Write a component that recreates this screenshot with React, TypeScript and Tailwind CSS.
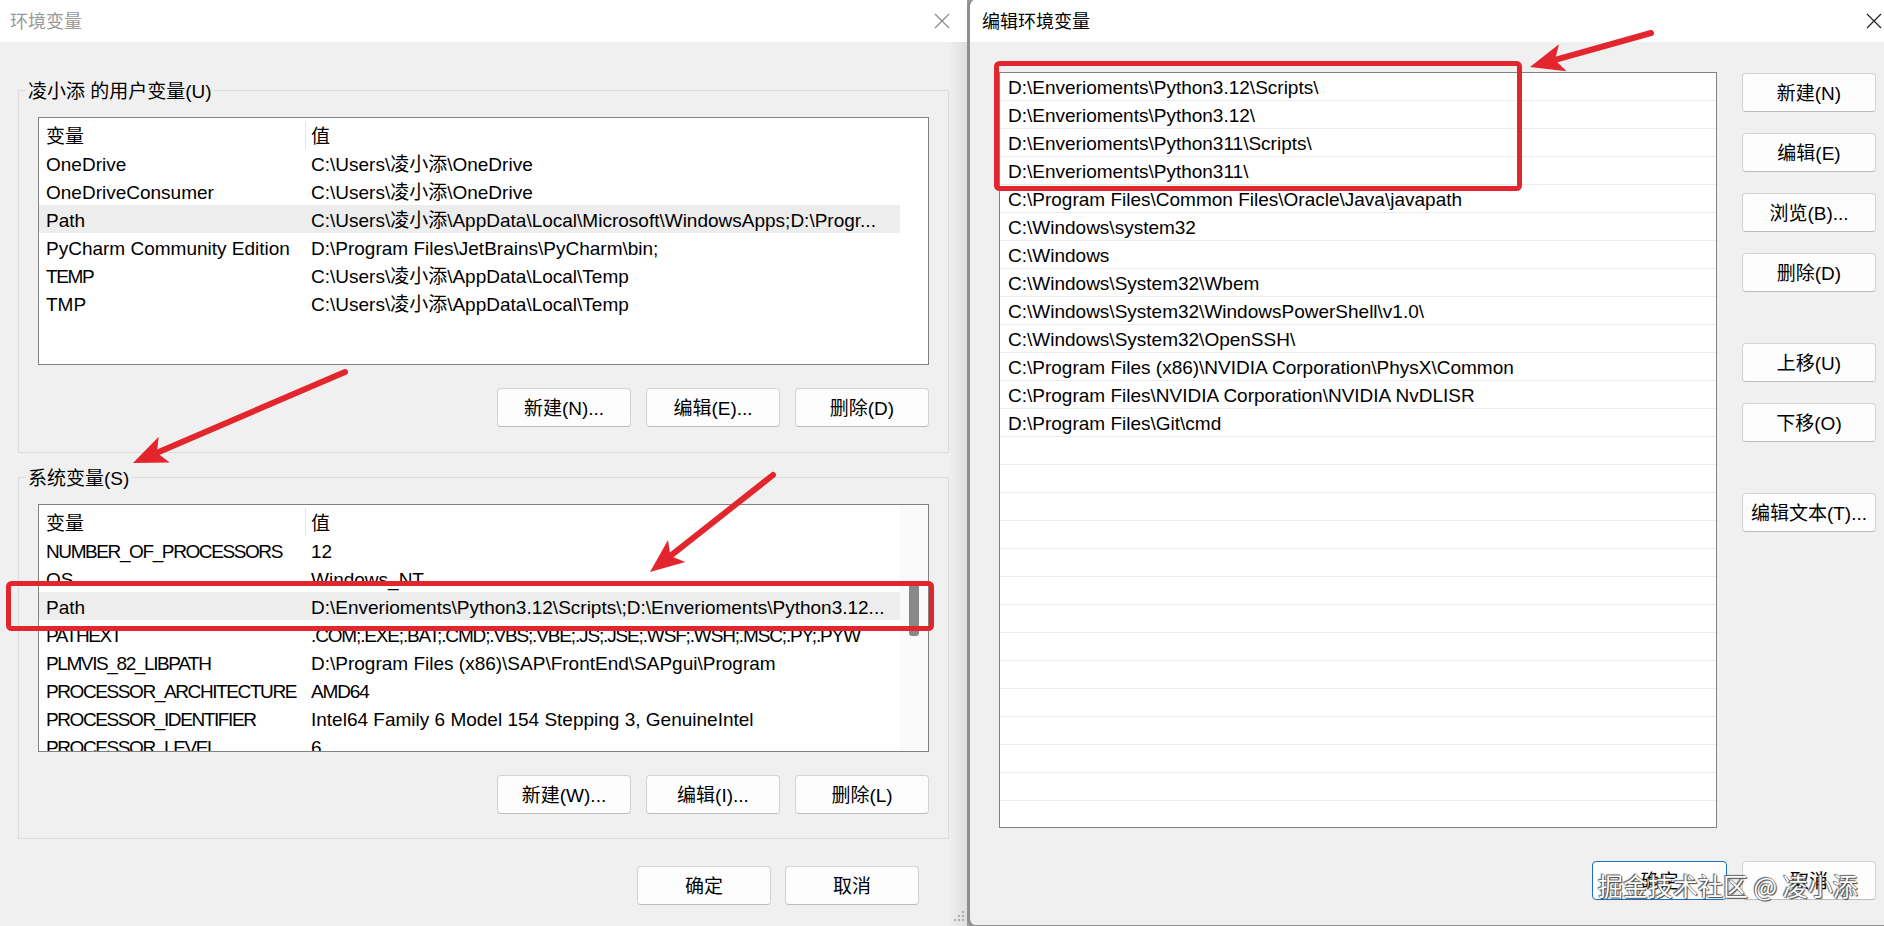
const FONT = "font-['Liberation_Sans','Noto_Sans_CJK_SC',sans-serif]";

const userVars: [string, string][] = [
  ['OneDrive', 'C:\\Users\\凌小添\\OneDrive'],
  ['OneDriveConsumer', 'C:\\Users\\凌小添\\OneDrive'],
  ['Path', 'C:\\Users\\凌小添\\AppData\\Local\\Microsoft\\WindowsApps;D:\\Progr...'],
  ['PyCharm Community Edition', 'D:\\Program Files\\JetBrains\\PyCharm\\bin;'],
  ['TEMP', 'C:\\Users\\凌小添\\AppData\\Local\\Temp'],
  ['TMP', 'C:\\Users\\凌小添\\AppData\\Local\\Temp'],
];

const sysVars: [string, string][] = [
  ['NUMBER_OF_PROCESSORS', '12'],
  ['OS', 'Windows_NT'],
  ['Path', 'D:\\Enverioments\\Python3.12\\Scripts\\;D:\\Enverioments\\Python3.12...'],
  ['PATHEXT', '.COM;.EXE;.BAT;.CMD;.VBS;.VBE;.JS;.JSE;.WSF;.WSH;.MSC;.PY;.PYW'],
  ['PLMVIS_82_LIBPATH', 'D:\\Program Files (x86)\\SAP\\FrontEnd\\SAPgui\\Program'],
  ['PROCESSOR_ARCHITECTURE', 'AMD64'],
  ['PROCESSOR_IDENTIFIER', 'Intel64 Family 6 Model 154 Stepping 3, GenuineIntel'],
  ['PROCESSOR_LEVEL', '6'],
];

const pathEntries = [
  'D:\\Enverioments\\Python3.12\\Scripts\\',
  'D:\\Enverioments\\Python3.12\\',
  'D:\\Enverioments\\Python311\\Scripts\\',
  'D:\\Enverioments\\Python311\\',
  'C:\\Program Files\\Common Files\\Oracle\\Java\\javapath',
  'C:\\Windows\\system32',
  'C:\\Windows',
  'C:\\Windows\\System32\\Wbem',
  'C:\\Windows\\System32\\WindowsPowerShell\\v1.0\\',
  'C:\\Windows\\System32\\OpenSSH\\',
  'C:\\Program Files (x86)\\NVIDIA Corporation\\PhysX\\Common',
  'C:\\Program Files\\NVIDIA Corporation\\NVIDIA NvDLISR',
  'D:\\Program Files\\Git\\cmd',
];

// Segoe UI capitals are narrower than Arial's, squeeze the all-caps strings a bit
const isCaps = (s: string) => s.length > 3 && s === s.toUpperCase() && /[A-Z]/.test(s);

function CloseIcon({ color }: { color: string }) {
  return (
    <svg width="16" height="16" viewBox="0 0 16 16">
      <path d="M1 1 L15 15 M15 1 L1 15" stroke={color} strokeWidth="1.2" fill="none" />
    </svg>
  );
}

function Btn({ label, focused = false, w = 'w-[134px]' }: { label: string; focused?: boolean; w?: string }) {
  return (
    <div
      className={`${w} h-[39px] pt-[3px] rounded-[4px] bg-[#fdfdfd] flex items-center justify-center text-[19px] text-black ${
        focused ? 'border border-[#1a6fc4]' : 'border border-[#d3d3d3] border-b-[#bdbdbd]'
      }`}
    >
      {label}
    </div>
  );
}

function VarList({ rows, selected, scroll }: { rows: [string, string][]; selected: number; scroll?: boolean }) {
  return (
    <div className="w-[891px] h-[248px] border border-[#828282] bg-white overflow-hidden flex">
      <div className="w-[861px] shrink-0 pt-[3px]">
        <div className="flex h-[28px] items-center">
          <div className="w-[266px] shrink-0 pl-[7px] pt-[4px]">变量</div>
          <div className="h-full flex items-center border-l border-[#e5e5e5] pl-[5px] pt-[4px]">值</div>
        </div>
        {rows.map(([k, v], i) => (
          <div
            key={i}
            className={`flex h-[28px] pt-[4px] items-center whitespace-nowrap overflow-hidden ${i === selected ? 'bg-[#ededed]' : ''}`}
          >
            <div className={`w-[266px] shrink-0 pl-[7px] ${isCaps(k) ? 'tracking-[-1.4px]' : ''}`}>{k}</div>
            <div className={`pl-[6px] ${isCaps(v) ? 'tracking-[-1.15px]' : ''}`}>{v}</div>
          </div>
        ))}
      </div>
      <div className={`flex-1 ${scroll ? 'bg-[#f9f9f9] pt-[76px] pl-[9px]' : ''}`}>
        {scroll && <div className="w-[10px] h-[55px] rounded-[3px] bg-[#888888]" />}
      </div>
    </div>
  );
}

function Group({ title, rows, selected, scroll, buttons, className }: {
  title: string; rows: [string, string][]; selected: number; scroll?: boolean; buttons: string[]; className: string;
}) {
  return (
    <fieldset className={`ml-[18px] w-[930px] border border-[#dcdcdc] ${className}`}>
      <legend className="ml-[7px] px-[2px] pt-[4px] text-[19px] leading-[24px]">{title}</legend>
      <div className="pl-[19px] pr-[19px] mt-[13px]">
        <VarList rows={rows} selected={selected} scroll={scroll} />
        <div className="mt-[23px] flex justify-end gap-[15px]">
          {buttons.map((b) => (
            <Btn key={b} label={b} />
          ))}
        </div>
      </div>
    </fieldset>
  );
}

function Arrow({ x1, y1, x2, y2 }: { x1: number; y1: number; x2: number; y2: number }) {
  const dx = x2 - x1;
  const dy = y2 - y1;
  const len = Math.hypot(dx, dy);
  const ux = dx / len;
  const uy = dy / len;
  const hl = 34;
  const hw = 14;
  const bx = x2 - ux * hl;
  const by = y2 - uy * hl;
  const px = -uy;
  const py = ux;
  return (
    <g>
      <line x1={x1} y1={y1} x2={bx + ux * 6} y2={by + uy * 6} stroke="#e3262e" strokeWidth="6" strokeLinecap="round" />
      <polygon
        points={`${x2},${y2} ${bx + px * hw},${by + py * hw} ${bx + ux * 8},${by + uy * 8} ${bx - px * hw},${by - py * hw}`}
        fill="#e3262e"
      />
    </g>
  );
}

export default function App() {
  return (
    <div className={`relative w-[1884px] h-[926px] flex overflow-hidden bg-[#9a9a9a] text-black text-[19px] ${FONT}`}>
      {/* 环境变量 */}
      <div className="w-[967px] h-full flex flex-col bg-[linear-gradient(to_right,#f0f0f0_948px,#dedede)]">
        <div className="h-[42px] shrink-0 bg-white flex items-center justify-between pl-[10px] pr-[17px]">
          <span className="text-[18px] text-[#999999] pt-[2px]">环境变量</span>
          <CloseIcon color="#8a8a8a" />
        </div>
        <Group
          className="mt-[34px] pb-[25px]"
          title="凌小添 的用户变量(U)"
          rows={userVars}
          selected={2}
          buttons={['新建(N)...', '编辑(E)...', '删除(D)']}
        />
        <Group
          className="mt-[10px] pb-[24px]"
          title="系统变量(S)"
          rows={sysVars}
          selected={2}
          scroll
          buttons={['新建(W)...', '编辑(I)...', '删除(L)']}
        />
        <div className="mt-[27px] flex justify-end gap-[14px] pr-[48px]">
          <Btn label="确定" />
          <Btn label="取消" />
        </div>
        <div className="mt-auto flex justify-end pr-[2px] pb-[4px]">
          <svg width="12" height="12" viewBox="0 0 12 12">
            {[[10, 2], [10, 6], [6, 6], [10, 10], [6, 10], [2, 10]].map(([cx, cy], i) => (
              <circle key={i} cx={cx} cy={cy} r="1.1" fill="#a0a0a0" />
            ))}
          </svg>
        </div>
      </div>

      {/* 编辑环境变量 */}
      <div className="flex-1 h-full flex flex-col border-l-[3px] border-b border-[#8e8e8e] rounded-tl-[8px] rounded-bl-[8px] bg-[#f0f0f0] overflow-hidden">
        <div className="h-[42px] shrink-0 bg-white flex items-center justify-between pl-[12px] pr-[2px]">
          <span className="text-[18px] pt-[2px]">编辑环境变量</span>
          <CloseIcon color="#222222" />
        </div>
        <div className="flex flex-col pt-[30px] pl-[29px] pr-[8px]">
          <div className="flex gap-[25px]">
            <div className="w-[718px] h-[756px] border border-[#828282] bg-white overflow-hidden">
              {Array.from({ length: 27 }).map((_, i) => (
                <div key={i} className="h-[28px] pt-[4px] border-b border-[#ebebeb] pl-[8px] flex items-center whitespace-nowrap">
                  {pathEntries[i] ?? ''}
                </div>
              ))}
            </div>
            <div className="w-[134px] pt-[1px] flex flex-col">
              <Btn label="新建(N)" />
              <div className="mt-[21px]"><Btn label="编辑(E)" /></div>
              <div className="mt-[21px]"><Btn label="浏览(B)..." /></div>
              <div className="mt-[21px]"><Btn label="删除(D)" /></div>
              <div className="mt-[51px]"><Btn label="上移(U)" /></div>
              <div className="mt-[21px]"><Btn label="下移(O)" /></div>
              <div className="mt-[51px]"><Btn label="编辑文本(T)..." /></div>
            </div>
          </div>
          <div className="mt-[33px] flex justify-end gap-[15px]">
            <Btn label="确定" focused w="w-[135px]" />
            <Btn label="取消" />
          </div>
        </div>
      </div>

      {/* watermark */}
      <div className="absolute left-[1598px] top-[869px] text-[25px] leading-[32px] text-white whitespace-nowrap font-['Noto_Sans_CJK_SC',sans-serif] [text-shadow:0_0_1px_#333,1px_1px_1px_#444,-1px_-1px_1px_#666] pointer-events-none">
        掘金技术社区 @ 凌小添
      </div>

      {/* annotations */}
      <svg className="absolute inset-0 pointer-events-none" width="1884" height="926" viewBox="0 0 1884 926">
        <rect x="8.5" y="583.5" width="923" height="45" rx="3" fill="none" stroke="#e3262e" strokeWidth="5" />
        <rect x="996.5" y="63.5" width="523" height="125" rx="3" fill="none" stroke="#e3262e" strokeWidth="5" />
        <Arrow x1={345} y1={372} x2={133} y2={463} />
        <Arrow x1={773} y1={475} x2={650} y2={572} />
        <Arrow x1={1651} y1={33} x2={1530} y2={67} />
      </svg>
    </div>
  );
}
